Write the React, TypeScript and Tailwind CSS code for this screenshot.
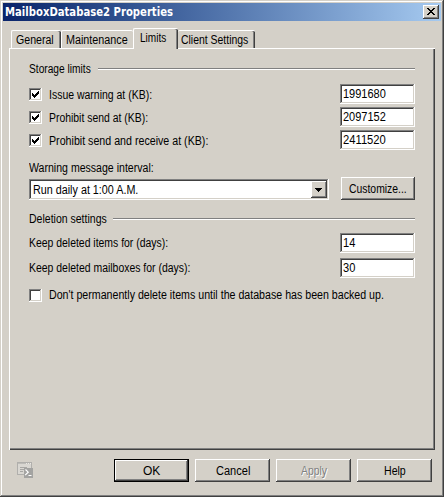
import { useLayoutEffect, useRef, useState, type ReactNode } from "react";
import clsx from "clsx";

const raised =
  "bg-[#d4d0c8] shadow-[inset_-1px_-1px_0_#404040,inset_1px_1px_0_#ffffff,inset_-2px_-2px_0_#808080]";
const sunken =
  "bg-white shadow-[inset_-1px_-1px_0_#ffffff,inset_1px_1px_0_#808080,inset_-2px_-2px_0_#d4d0c8,inset_2px_2px_0_#404040]";

/* A single line of text condensed to a fixed width. */
function Label({ w, children, className }: { w: number; children: string; className?: string }) {
  const ref = useRef<HTMLSpanElement>(null);
  const [scale, setScale] = useState(1);
  useLayoutEffect(() => {
    if (ref.current) setScale(w / ref.current.offsetWidth);
  }, [w]);
  return (
    <span className={clsx("block shrink-0 h-[14px] leading-[14px]", className)} style={{ width: w }}>
      <span ref={ref} className="inline-block origin-left whitespace-nowrap" style={{ transform: `scaleX(${scale})` }}>
        {children}
      </span>
    </span>
  );
}

function Tab({ label, w, className }: { label: string; w: number; className: string }) {
  return (
    <div
      className={clsx(
        "flex shrink-0 rounded-t-[2px] border-t border-l border-white bg-[#d4d0c8] shadow-[inset_-1px_0_0_#404040,inset_-2px_0_0_#808080]",
        className,
      )}
    >
      <Label w={w}>{label}</Label>
    </div>
  );
}

function Rule() {
  return <div className="h-[2px] flex-1 border-t border-b border-t-[#808080] border-b-white" />;
}

function Check({ checked }: { checked?: boolean }) {
  return (
    <div className={clsx("h-[13px] w-[13px] shrink-0", sunken)}>
      {checked && (
        <svg width="13" height="13" viewBox="0 0 13 13" shapeRendering="crispEdges">
          <path d="M3 5h1v1h1v1h1v-1h1v-1h1v-1h1v-1h1v3h-1v1h-1v1h-1v1h-1v1h-1v-1h-1v-1h-1z" fill="#000" />
        </svg>
      )}
    </div>
  );
}

function Field({ value, w }: { value: string; w: number }) {
  return (
    <div className={clsx("h-5 w-[75px] shrink-0 pt-[3px] pl-[3px]", sunken)}>
      <Label w={w}>{value}</Label>
    </div>
  );
}

function Row({ children, className }: { children: ReactNode; className?: string }) {
  return <div className={clsx("flex h-5 items-center justify-between", className)}>{children}</div>;
}

function Limit({ label, w, value }: { label: string; w: number; value: string }) {
  return (
    <Row>
      <div className="flex items-center gap-[7px] pt-px">
        <Check checked />
        <Label w={w}>{label}</Label>
      </div>
      <Field value={value} w={43} />
    </Row>
  );
}

function Button({ label, w, className }: { label: string; w: number; className?: string }) {
  return (
    <button className={clsx("flex h-[23px] w-[75px] shrink-0 items-center justify-center", raised, className)}>
      <Label w={w} className="text-left">{label}</Label>
    </button>
  );
}

function ScriptIcon() {
  return (
    <svg width="17" height="17" viewBox="0 0 17 17" className="shrink-0">
      <rect x=".5" y=".5" width="14" height="12" fill="#d9d7d2" stroke="#b0afac" />
      <path d="M1 1.5h13" stroke="#bdbcb8" />
      <path d="M9 1.5h1m1 0h1m1 0h1" stroke="#eceae6" />
      <path d="M3 5.5h7M3 7.5h4M3 9.5h3" stroke="#a8a7a4" />
      <rect x="7" y="6" width="9" height="10" fill="#a3a3a1" />
      <path d="M8.5 7.5l2.7 2.7-3 3" fill="none" stroke="#fff" strokeWidth="1.2" />
      <path d="M11.5 13.5h3" stroke="#fff" />
    </svg>
  );
}

export default function App() {
  return (
    <div className="h-[497px] w-[444px] overflow-hidden bg-[#d4d0c8] px-[3px] pt-[3px] font-['Liberation_Sans',Arial,sans-serif] text-[12px] text-black shadow-[inset_-1px_-1px_0_#404040,inset_1px_1px_0_#d4d0c8,inset_-2px_-2px_0_#808080,inset_2px_2px_0_#ffffff]">
      <div className="flex h-[18px] items-center justify-between bg-linear-to-r from-[#0a246a] to-[#a6caf0] pr-[2px] pl-[2px]">
        <Label w={168} className="font-['DejaVu_Sans',sans-serif] text-[12px] font-bold text-white">
          MailboxDatabase2 Properties
        </Label>
        <button className={clsx("flex h-[14px] w-4 items-start justify-start", raised)}>
          <svg width="16" height="14" viewBox="0 0 16 14" shapeRendering="crispEdges">
            <path
              d="M4 3h2v1h1v1h2v-1h1v-1h2v1h-1v1h-1v1h-1v1h1v1h1v1h1v1h-2v-1h-1v-1h-2v1h-1v1h-2v-1h1v-1h1v-1h1v-1h-1v-1h-1v-1h-1z"
              fill="#000"
            />
          </svg>
        </button>
      </div>

      <div className="flex h-[27px] items-end pl-2">
        <Tab label="General" w={38} className="h-[18px] w-[50px] pt-[2px] pl-[4px]" />
        <Tab label="Maintenance" w={62} className="h-[18px] w-[72px] pt-[2px] pl-[4px] !shadow-none" />
        <Tab label="Limits" w={26} className="relative z-10 -mb-px h-[21px] w-[45px] pt-[2px] pl-[6px]" />
        <Tab label="Client Settings" w={67} className="h-[18px] w-[77px] pt-[2px] pl-[3px] !border-l-0" />
      </div>

      <div className="ml-[6px] h-[402px] w-[426px] border-t border-l border-white pt-[13px] pr-[20px] pl-[19px] shadow-[inset_-1px_-1px_0_#404040,inset_-2px_-2px_0_#808080]">
        <div className="flex h-[14px] items-center gap-[7px]">
          <Label w={62}>Storage limits</Label>
          <Rule />
        </div>
        <div className="mt-2 flex flex-col gap-[3px]">
          <Limit label="Issue warning at (KB):" w={103} value="1991680" />
          <Limit label="Prohibit send at (KB):" w={99} value="2097152" />
          <Limit label="Prohibit send and receive at (KB):" w={159} value="2411520" />
        </div>

        <Label w={125} className="mt-[11px]">Warning message interval:</Label>
        <div className="mt-[2px] flex h-[23px] items-end justify-between">
          <div className={clsx("flex h-[21px] w-[300px] justify-between p-[2px]", sunken)}>
            <Label w={105} className="mt-[2px] ml-[2px]">Run daily at 1:00 A.M.</Label>
            <div className={clsx("h-[17px] w-4", raised)}>
              <svg width="16" height="17" viewBox="0 0 16 17" shapeRendering="crispEdges">
                <path d="M4 7h7v1h-1v1h-1v1h-1v1h-1v-1h-1v-1h-1v-1h-1z" fill="#000" />
              </svg>
            </div>
          </div>
          <Button label="Customize..." w={58} className="!w-[74px]" />
        </div>

        <div className="mt-3 flex h-[14px] items-center gap-[6px]">
          <Label w={78}>Deletion settings</Label>
          <Rule />
        </div>
        <Row className="mt-[7px]">
          <Label w={139}>Keep deleted items for (days):</Label>
          <Field value="14" w={12} />
        </Row>
        <Row className="mt-[5px]">
          <Label w={161}>Keep deleted mailboxes for (days):</Label>
          <Field value="30" w={12} />
        </Row>
        <div className="mt-[10px] flex items-center gap-[7px]">
          <Check />
          <Label w={335}>Don't permanently delete items until the database has been backed up.</Label>
        </div>
      </div>

      <div className="mt-[9px] flex h-[23px] gap-[6px] pl-[14px]">
        <div className="flex w-[91px] items-center">
          <ScriptIcon />
        </div>
        <Button
          label="OK"
          w={17}
          className="!shadow-[inset_0_0_0_1px_#000,inset_-2px_-2px_0_#404040,inset_2px_2px_0_#ffffff,inset_-3px_-3px_0_#808080]"
        />
        <Button label="Cancel" w={34} />
        <Button label="Apply" w={26} className="text-[#808080] [text-shadow:1px_1px_0_#fff]" />
        <Button label="Help" w={22} />
      </div>
    </div>
  );
}
